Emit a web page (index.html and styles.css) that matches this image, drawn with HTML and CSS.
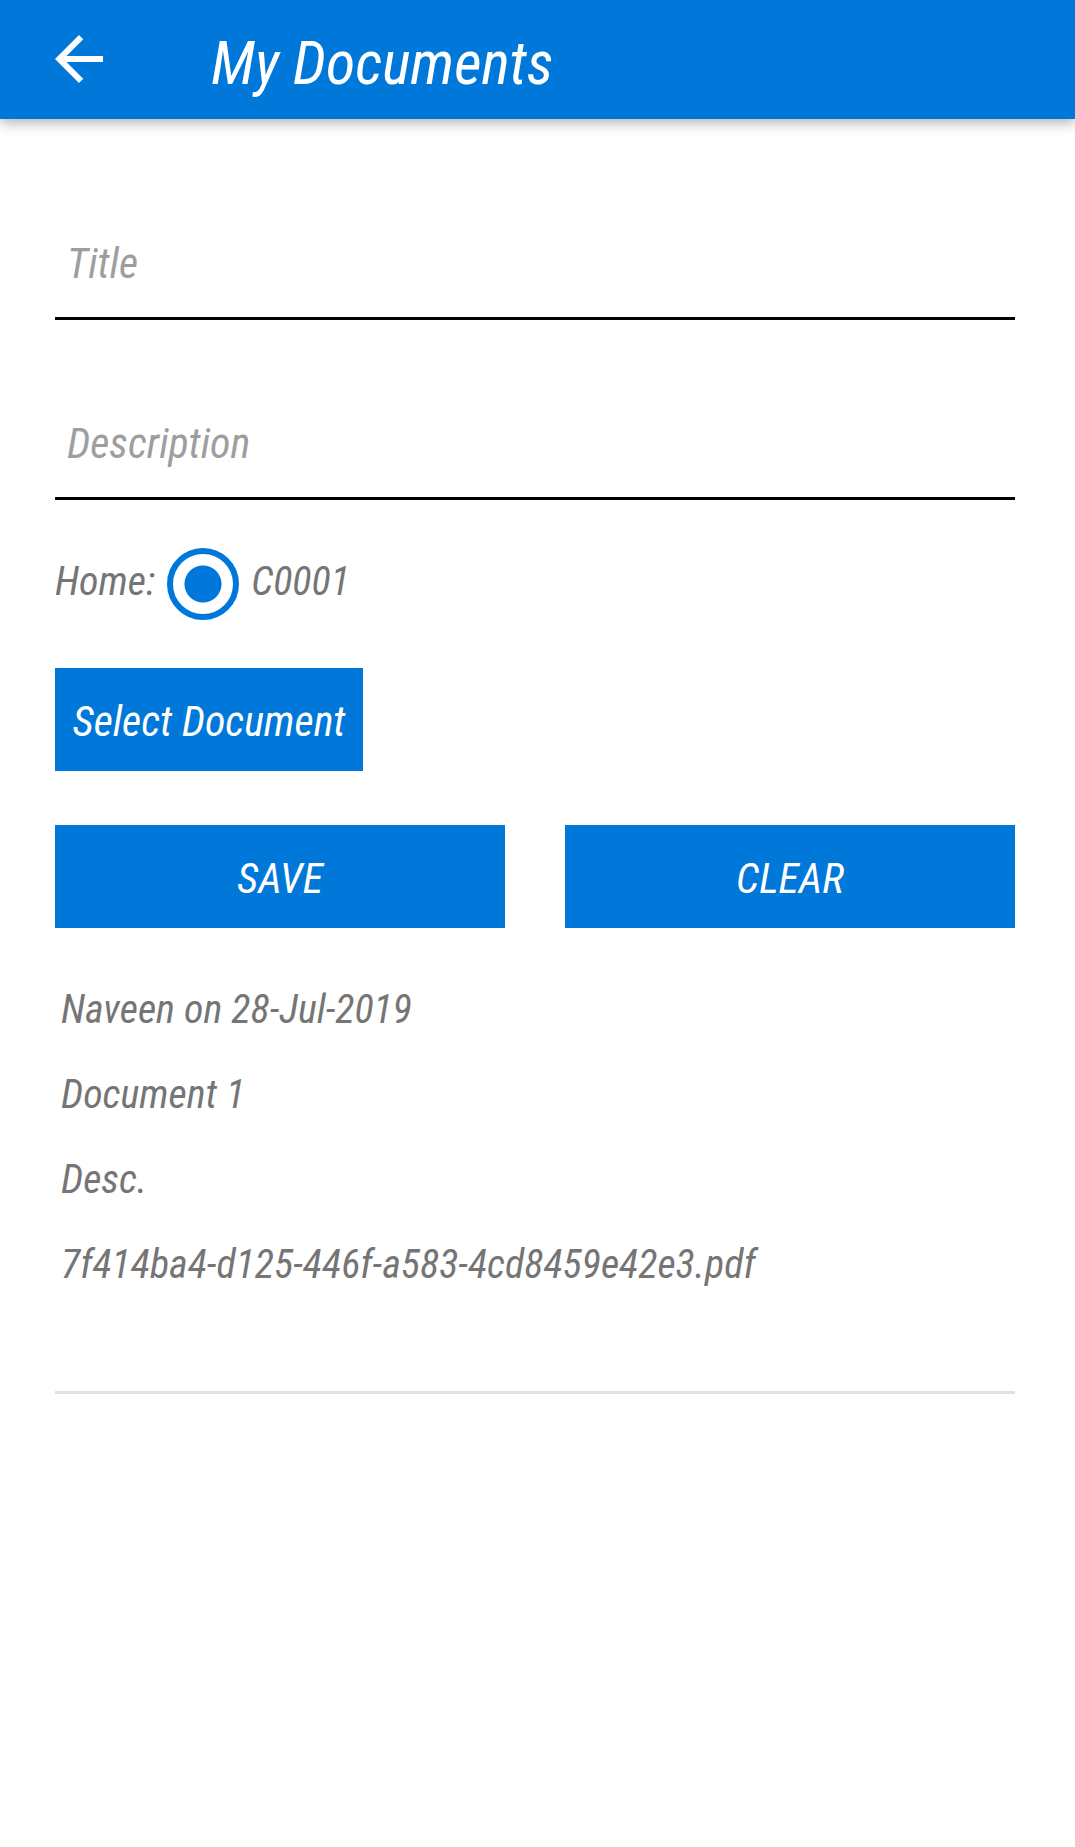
FILE: index.html
```html
<!DOCTYPE html>
<html lang="en">
<head>
<meta charset="utf-8">
<meta name="viewport" content="width=device-width, initial-scale=1">
<title>My Documents</title>
<link rel="stylesheet" href="styles.css">
</head>
<body>
<header class="app-bar">
  <button class="back" type="button" aria-label="Back">
    <svg viewBox="0 0 24 24" aria-hidden="true"><path d="M20 11H7.83l5.59-5.59L12 4l-8 8 8 8 1.41-1.41L7.83 13H20v-2z"/></svg>
  </button>
  <h1 class="app-title">My Documents</h1>
</header>
<main class="content">
  <form class="form">
    <input class="field" type="text" placeholder="Title" aria-label="Title">
    <input class="field" type="text" placeholder="Description" aria-label="Description">
    <div class="home">
      <span class="home-label">Home:</span>
      <input class="radio" type="radio" name="home" id="home-c0001" checked>
      <label class="home-option" for="home-c0001">C0001</label>
    </div>
    <button class="btn btn-select" type="button">Select Document</button>
    <div class="actions">
      <button class="btn" type="button">SAVE</button>
      <button class="btn" type="reset">CLEAR</button>
    </div>
  </form>
  <article class="document">
    <p>Naveen on 28-Jul-2019</p>
    <p>Document 1</p>
    <p>Desc.</p>
    <p>7f414ba4-d125-446f-a583-4cd8459e42e3.pdf</p>
  </article>
</main>
</body>
</html>
```
FILE: styles.css
```css
* {
  box-sizing: border-box;
}

body {
  margin: 0;
  background: #fff;
  color: #757575;
  font: italic 40px/48px "Roboto Condensed", Roboto, sans-serif;
}

input,
button {
  font: inherit;
  border: 0;
  border-radius: 0;
  margin: 0;
}

.app-bar {
  display: flex;
  align-items: center;
  gap: 96px;
  height: 119px;
  padding: 0 43px 2px;
  background: #0078d9;
  color: #fff;
  box-shadow: 0 4px 12px rgba(0, 0, 0, 0.3);
}

.back {
  width: 72px;
  height: 72px;
  padding: 0;
  background: none;
}

.back svg {
  display: block;
  fill: #fff;
}

.app-title {
  margin: 0;
  padding-top: 10px;
  font-size: 60px;
  font-weight: 400;
  line-height: 72px;
}

.content {
  padding: 81px 60px 60px 55px;
}

.form {
  display: flex;
  flex-direction: column;
}

.field {
  width: 100%;
  height: 120px;
  margin-bottom: 60px;
  padding: 10px 12px 0;
  border-bottom: 3px solid #000;
  background: none;
  color: #757575;
  font-size: 42px;
  outline: 0;
}

.field::placeholder {
  color: #9e9e9e;
  opacity: 1;
}

.home {
  display: flex;
  align-items: center;
  gap: 12px;
  margin: -12px 0 48px;
}

.home-label,
.home-option {
  padding-bottom: 4px;
}

.radio {
  appearance: none;
  width: 72px;
  height: 72px;
  border: 6px solid #0078d9;
  border-radius: 50%;
  background: radial-gradient(circle, #0078d9 18px, transparent 19px);
}

.btn {
  height: 103px;
  padding: 4px 12px 0;
  background: #0078d9;
  color: #fff;
  font-size: 42px;
}

.btn-select {
  align-self: flex-start;
  min-width: 308px;
}

.actions {
  display: grid;
  grid-template-columns: 1fr 1fr;
  gap: 60px;
  margin-top: 54px;
}

.document {
  display: flex;
  flex-direction: column;
  gap: 37px;
  padding: 58px 6px 102px;
  border-bottom: 3px solid #e0e0e0;
}

.document p {
  margin: 0;
  overflow-wrap: anywhere;
}
```
